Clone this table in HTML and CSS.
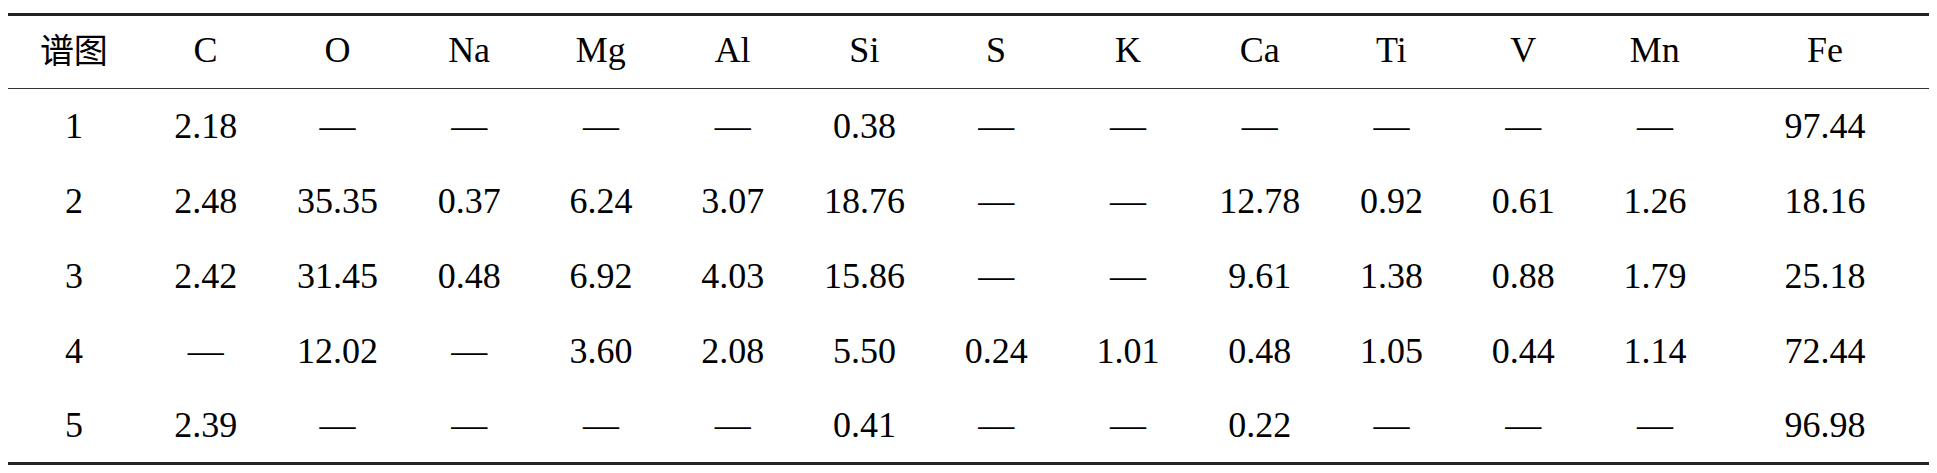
FILE: index.html
```html
<!DOCTYPE html>
<html>
<head>
<meta charset="utf-8">
<title>谱图</title>
<link rel="stylesheet" href="styles.css">
</head>
<body>
<div class="wrap">
<table class="data">
<colgroup>
<col class="c"><col class="c"><col class="c"><col class="c"><col class="c"><col class="c"><col class="c"><col class="c"><col class="c"><col class="c"><col class="c"><col class="c"><col class="c"><col class="last">
</colgroup>
<thead>
<tr><th><span class="cjk">谱图</span></th><th>C</th><th>O</th><th>Na</th><th>Mg</th><th>Al</th><th>Si</th><th>S</th><th>K</th><th>Ca</th><th>Ti</th><th>V</th><th>Mn</th><th>Fe</th></tr>
</thead>
<tbody>
<tr><td>1</td><td>2.18</td><td>—</td><td>—</td><td>—</td><td>—</td><td>0.38</td><td>—</td><td>—</td><td>—</td><td>—</td><td>—</td><td>—</td><td>97.44</td></tr>
<tr><td>2</td><td>2.48</td><td>35.35</td><td>0.37</td><td>6.24</td><td>3.07</td><td>18.76</td><td>—</td><td>—</td><td>12.78</td><td>0.92</td><td>0.61</td><td>1.26</td><td>18.16</td></tr>
<tr><td>3</td><td>2.42</td><td>31.45</td><td>0.48</td><td>6.92</td><td>4.03</td><td>15.86</td><td>—</td><td>—</td><td>9.61</td><td>1.38</td><td>0.88</td><td>1.79</td><td>25.18</td></tr>
<tr><td>4</td><td>—</td><td>12.02</td><td>—</td><td>3.60</td><td>2.08</td><td>5.50</td><td>0.24</td><td>1.01</td><td>0.48</td><td>1.05</td><td>0.44</td><td>1.14</td><td>72.44</td></tr>
<tr><td>5</td><td>2.39</td><td>—</td><td>—</td><td>—</td><td>—</td><td>0.41</td><td>—</td><td>—</td><td>0.22</td><td>—</td><td>—</td><td>—</td><td>96.98</td></tr>
</tbody>
</table>
</div>
</body>
</html>
```
FILE: styles.css
```css
html, body {
  margin: 0;
  padding: 0;
  background: #ffffff;
}
.wrap {
  padding: 13px 8px 0 8px;
}
.data {
  width: 1921px;
  border-collapse: collapse;
  table-layout: fixed;
  font-family: "Liberation Serif", "Times New Roman", serif;
  font-size: 36px;
  color: #000000;
}
.cjk {
  font-family: "Noto Sans CJK SC", sans-serif;
  font-size: 34px;
  font-weight: 400;
}
.data col.c {
  width: 131.75px;
}
.data thead tr {
  border-top: 3px solid #222222;
  border-bottom: 1.5px solid #333333;
}
.data th {
  font-weight: normal;
  height: 74px;
  padding: 0 0 5px 0;
  box-sizing: border-box;
  text-align: center;
  vertical-align: middle;
  line-height: 40px;
}
.data tbody tr:last-child {
  border-bottom: 3.5px solid #222222;
}
.data td {
  height: 75px;
  box-sizing: border-box;
  padding: 0;
  text-align: center;
  vertical-align: middle;
  line-height: 40px;
}
```
